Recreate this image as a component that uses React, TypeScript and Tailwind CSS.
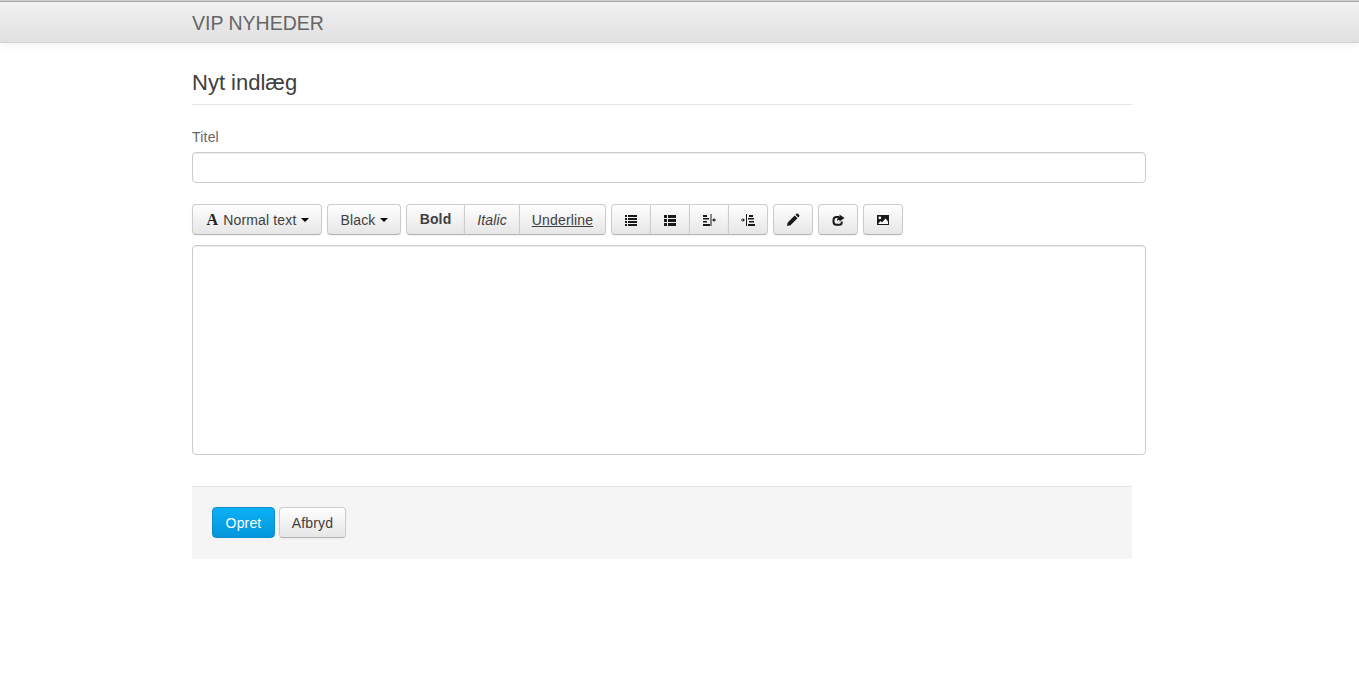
import type { ReactNode } from 'react';

const btn =
  'h-[31px] pt-px flex items-center justify-center bg-gradient-to-b from-white to-[#e6e6e6] border border-[#ccc] border-b-[#b3b3b3] text-[#404040] text-[14px] tracking-[0.16px] shadow-[inset_0_1px_0_rgba(255,255,255,0.2),0_1px_2px_rgba(0,0,0,0.05)]';

function Caret() {
  return <span className="ml-[4px] -mt-px w-0 h-0 border-x-[4px] border-x-transparent border-t-[4px] border-t-black" />;
}

function ListIcon() {
  return (
    <svg width="14" height="14" viewBox="0 0 14 14" fill="#1a1a1a">
      <path d="M1 2h2v2H1zM4 2h9v2H4zM1 5h2v2H1zM4 5h9v2H4zM1 8h2v2H1zM4 8h9v2H4zM1 11h2v2H1zM4 11h9v2H4z" />
    </svg>
  );
}

function ThickListIcon() {
  return (
    <svg width="14" height="14" viewBox="0 0 14 14" fill="#1a1a1a">
      <path d="M1 2h3v3H1zM5 2h8v3H5zM1 6h3v3H1zM5 6h8v3H5zM1 10h3v3H1zM5 10h8v3H5z" />
    </svg>
  );
}

function OutdentIcon() {
  return (
    <svg width="14" height="14" viewBox="0 0 14 14" fill="#1a1a1a">
      <path d="M1 2h4v2H1zM1 5h6v1.500H1zM1 8h4v1.500H1zM1 11h7v2H1zM8.500 1h1v12h-1zM12 6.500h2v1h-2zM10 7l2.500-2v4z" />
    </svg>
  );
}

function IndentIcon() {
  return (
    <svg width="14" height="14" viewBox="0 0 14 14" fill="#1a1a1a">
      <path d="M8 2h4v2H8zM7 5h6v1.500H7zM8 8h5v1.500H8zM7 11h7v2H7zM5 1h1v12H5zM0 6.500h2v1H0zM4 7L1.500 5v4z" />
    </svg>
  );
}

function PencilIcon() {
  return (
    <svg width="14" height="14" viewBox="0 0 14 14" fill="#1a1a1a">
      <path d="M1 13l.7-3.500 7-7 2.800 2.800-7 7zM9.500 1.800l1-1c.4-.4 1-.4 1.400 0l1.300 1.300c.4.400.4 1 0 1.400l-1 1z" />
    </svg>
  );
}

function ShareIcon() {
  return (
    <svg width="14" height="14" viewBox="0 0 14 14" fill="none">
      <path d="M8 4H5.500C3.800 4 2.500 5.200 2.500 7v1.700c0 1.700 1.200 3 2.900 3h3c1.400 0 2.300-1 2.300-2.200V8.500" stroke="#1a1a1a" strokeWidth="2" />
      <path fill="#1a1a1a" d="M8.500 1.500L13.500 5 8.500 8.500V7c-1.300 0-2 .4-2.500 1.200C6 5.800 7 4 8.500 3.500z" />
    </svg>
  );
}

function PictureIcon() {
  return (
    <svg width="14" height="14" viewBox="0 0 14 14">
      <path fill="#1a1a1a" d="M1 2h12v10H1z" />
      <circle cx="3.800" cy="4.800" r="1.400" fill="#fff" />
      <path fill="#fff" d="M2 11l2.500-3 1.500 1.500L9.500 5.500 12 8.500V11z" />
    </svg>
  );
}

function Group({ children }: { children: ReactNode }) {
  return <div className="flex">{children}</div>;
}

export default function App() {
  return (
    <div className="min-h-[679px] bg-white font-['Liberation_Sans',Arial,sans-serif] text-[14px] text-[#404040]">
      {/* Navbar */}
      <div className="h-[43px] border-t border-t-[#d0d0d0] border-b border-b-[#d4d4d4] bg-gradient-to-b from-[#f2f2f2] to-[#e0e0e0] shadow-[inset_0_1px_0_#a8a8a8,0_1px_8px_rgba(0,0,0,0.08)] pl-[192px] flex items-center">
        <a className="text-[#666] text-[19.5px] leading-[20px] mt-[2px]">VIP NYHEDER</a>
      </div>

      <div className="ml-[192px] w-[940px]">
        <h1 className="mt-[23px] h-[39px] leading-[34px] text-[22px] text-[#404040] border-b border-[#e5e5e5]">Nyt indlæg</h1>

        <label className="block mt-[22px] h-[20px] leading-[20px] text-[#666] tracking-[0.2px]">Titel</label>
        <input
          type="text"
          className="block mt-[5px] w-[954px] h-[31px] bg-white border border-[#ccc] rounded-[4px] shadow-[inset_0_1px_1px_rgba(0,0,0,0.075)] outline-none"
        />

        {/* Toolbar */}
        <div className="mt-[21px] flex gap-[5px] w-[954px]">
          <Group>
            <button className={`${btn} w-[130px] rounded-[4px]`}>
              <span className="font-['Liberation_Serif',serif] font-bold not-italic text-[16px] text-[#222] ml-[1px] mr-[5px]">A</span>
              Normal text
              <Caret />
            </button>
          </Group>
          <Group>
            <button className={`${btn} w-[74px] rounded-[4px]`}>
              Black
              <Caret />
            </button>
          </Group>
          <Group>
            <button className={`${btn} w-[59px] rounded-l-[4px] font-bold`}><span className="-mt-[1px]">Bold</span></button>
            <button className={`${btn} w-[56px] -ml-px italic`}>Italic</button>
            <button className={`${btn} w-[87px] -ml-px rounded-r-[4px] underline`}>Underline</button>
          </Group>
          <Group>
            <button className={`${btn} w-[40px] rounded-l-[4px]`}><ListIcon /></button>
            <button className={`${btn} w-[40px] -ml-px`}><ThickListIcon /></button>
            <button className={`${btn} w-[40px] -ml-px`}><OutdentIcon /></button>
            <button className={`${btn} w-[40px] -ml-px rounded-r-[4px]`}><IndentIcon /></button>
          </Group>
          <Group>
            <button className={`${btn} w-[40px] rounded-[4px]`}><PencilIcon /></button>
          </Group>
          <Group>
            <button className={`${btn} w-[40px] rounded-[4px]`}><ShareIcon /></button>
          </Group>
          <Group>
            <button className={`${btn} w-[40px] rounded-[4px]`}><PictureIcon /></button>
          </Group>
        </div>

        {/* Editor */}
        <div className="mt-[10px] w-[954px] h-[210px] bg-white border border-[#ccc] rounded-[4px] shadow-[inset_0_1px_1px_rgba(0,0,0,0.075)]" />

        {/* Actions */}
        <div className="mt-[31px] h-[73px] bg-[#f5f5f5] border-t border-[#e5e5e5] pt-[20px] pl-[20px] flex gap-[4px]">
          <button className="h-[31px] pt-px w-[63px] rounded-[4px] border border-[#0a8ccf] bg-gradient-to-b from-[#0cb0f5] to-[#0496dc] text-white text-[14px] tracking-[0.16px]">Opret</button>
          <button className={`${btn} w-[67px] rounded-[4px]`}>Afbryd</button>
        </div>
      </div>
    </div>
  );
}
